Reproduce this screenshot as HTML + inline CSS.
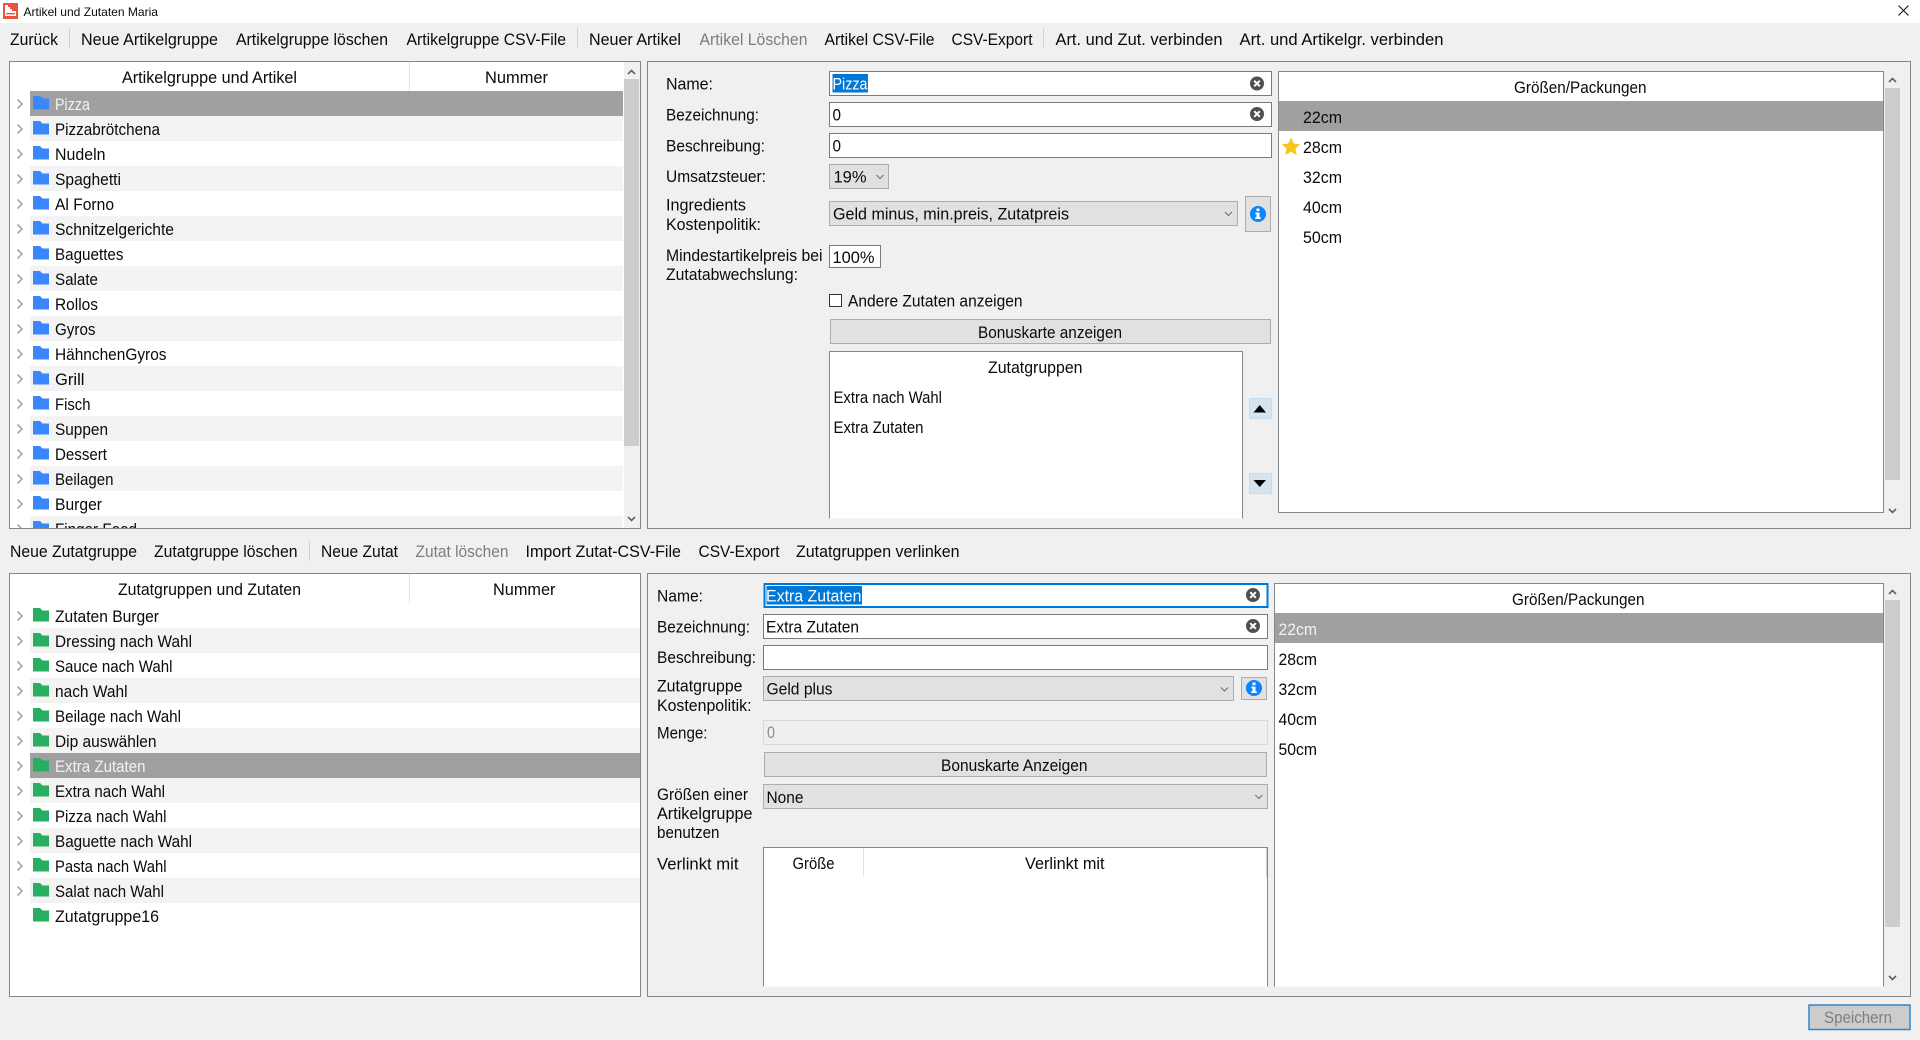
<!DOCTYPE html>
<html lang="de">
<head>
<meta charset="utf-8">
<title>Artikel und Zutaten Maria</title>
<style>
html,body{margin:0;padding:0;background:#f0f0f0;width:1920px;height:1040px;overflow:hidden}
svg{display:block}
text{font-family:"Liberation Sans",Arial,sans-serif;font-size:16.5px;fill:#0a0a0a}
.g{fill:#7d7d7d}
.w{fill:#f2f2f2}
.b{fill:#a0a0a0}
.box{fill:#fff;stroke:#82868f;stroke-width:1}
.pan{fill:#f0f0f0;stroke:#82868f;stroke-width:1}
.inp{fill:#fff;stroke:#7a7a7a;stroke-width:1}
.cmb{fill:#e1e1e1;stroke:#adadad;stroke-width:1}
.chv{fill:none;stroke:#6a6a6a;stroke-width:1}
.sc{fill:none;stroke:#606060;stroke-width:1.6}
</style>
</head>
<body>
<svg xmlns="http://www.w3.org/2000/svg" width="1920" height="1040" viewBox="0 0 1920 1040">
<defs>
<g id="ch"><path d="M17.5 8.5L22 13L17.5 17.5" fill="none" stroke="#a8a8a8" stroke-width="1.6"/></g>
<g id="fb"><path d="M33 5H40L42.5 7.5H49V18.5H33Z" fill="#3a86ff"/></g>
<g id="fg"><path d="M33 5H40L42.5 7.5H49V18.5H33Z" fill="#27ae60"/></g>
<g id="cl"><circle cx="0" cy="0" r="7" fill="#4f4f4f"/><path d="M-2.8 -2.8L2.8 2.8M2.8 -2.8L-2.8 2.8" stroke="#fff" stroke-width="2"/></g>
<g id="in"><circle cx="0" cy="0" r="8" fill="#0a84ff"/><rect x="-1.5" y="-5.5" width="3" height="2.6" fill="#fff"/><path d="M-2.6 -1.5H1.5V3.2H2.8V5H-2.8V3.2H-1.5V0.2H-2.6Z" fill="#fff"/></g>
<clipPath id="c1"><rect x="10" y="62" width="630" height="466"/></clipPath>
</defs>

<rect width="1920" height="1040" fill="#f0f0f0"/>

<!-- Title bar -->
<rect width="1920" height="23" fill="#fff"/>
<rect x="3" y="3" width="15" height="16" fill="#e8553f"/>
<path d="M5 5H8V7H10V9H12V11H16V16H5Z" fill="#fff"/>
<rect x="6" y="13" width="9" height="1.4" fill="#e8553f"/>
<text x="23.5" y="16" style="font-size:12px" textLength="134.5" lengthAdjust="spacingAndGlyphs">Artikel und Zutaten Maria</text>
<path d="M1898.5 5.5L1908.5 15.5M1908.5 5.5L1898.5 15.5" stroke="#111" stroke-width="1" fill="none"/>

<!-- Toolbar 1 -->
<text x="10" y="45" textLength="48" lengthAdjust="spacingAndGlyphs">Zurück</text>
<rect x="69" y="28" width="1" height="20" fill="#d0d0d0"/>
<text x="81" y="45" textLength="137" lengthAdjust="spacingAndGlyphs">Neue Artikelgruppe</text>
<text x="236" y="45" textLength="152" lengthAdjust="spacingAndGlyphs">Artikelgruppe löschen</text>
<text x="406.5" y="45" textLength="159.5" lengthAdjust="spacingAndGlyphs">Artikelgruppe CSV-File</text>
<rect x="577" y="28" width="1" height="20" fill="#d0d0d0"/>
<text x="589" y="45" textLength="92" lengthAdjust="spacingAndGlyphs">Neuer Artikel</text>
<text class="g" x="699.5" y="45" textLength="108" lengthAdjust="spacingAndGlyphs">Artikel Löschen</text>
<text x="824.5" y="45" textLength="110" lengthAdjust="spacingAndGlyphs">Artikel CSV-File</text>
<text x="951.5" y="45" textLength="81" lengthAdjust="spacingAndGlyphs">CSV-Export</text>
<rect x="1043" y="28" width="1" height="20" fill="#d0d0d0"/>
<text x="1055.5" y="45" textLength="167" lengthAdjust="spacingAndGlyphs">Art. und Zut. verbinden</text>
<text x="1239.5" y="45" textLength="204" lengthAdjust="spacingAndGlyphs">Art. und Artikelgr. verbinden</text>

<!-- Tree 1 -->
<rect class="box" x="9.5" y="61.5" width="631" height="467"/>
<rect x="409" y="62" width="1" height="29" fill="#e3e3e3"/>
<text x="122" y="83" textLength="175" lengthAdjust="spacingAndGlyphs">Artikelgruppe und Artikel</text>
<text x="485" y="83" textLength="63" lengthAdjust="spacingAndGlyphs">Nummer</text>
<g clip-path="url(#c1)">
<rect x="30" y="91" width="593" height="25" fill="#a0a0a0"/>
<rect x="30" y="116" width="593" height="25" fill="#f3f3f3"/>
<rect x="30" y="166" width="593" height="25" fill="#f3f3f3"/>
<rect x="30" y="216" width="593" height="25" fill="#f3f3f3"/>
<rect x="30" y="266" width="593" height="25" fill="#f3f3f3"/>
<rect x="30" y="316" width="593" height="25" fill="#f3f3f3"/>
<rect x="30" y="366" width="593" height="25" fill="#f3f3f3"/>
<rect x="30" y="416" width="593" height="25" fill="#f3f3f3"/>
<rect x="30" y="466" width="593" height="25" fill="#f3f3f3"/>
<rect x="30" y="516" width="593" height="25" fill="#f3f3f3"/>
<use href="#ch" y="91"/><use href="#fb" y="91"/>
<use href="#ch" y="116"/><use href="#fb" y="116"/>
<use href="#ch" y="141"/><use href="#fb" y="141"/>
<use href="#ch" y="166"/><use href="#fb" y="166"/>
<use href="#ch" y="191"/><use href="#fb" y="191"/>
<use href="#ch" y="216"/><use href="#fb" y="216"/>
<use href="#ch" y="241"/><use href="#fb" y="241"/>
<use href="#ch" y="266"/><use href="#fb" y="266"/>
<use href="#ch" y="291"/><use href="#fb" y="291"/>
<use href="#ch" y="316"/><use href="#fb" y="316"/>
<use href="#ch" y="341"/><use href="#fb" y="341"/>
<use href="#ch" y="366"/><use href="#fb" y="366"/>
<use href="#ch" y="391"/><use href="#fb" y="391"/>
<use href="#ch" y="416"/><use href="#fb" y="416"/>
<use href="#ch" y="441"/><use href="#fb" y="441"/>
<use href="#ch" y="466"/><use href="#fb" y="466"/>
<use href="#ch" y="491"/><use href="#fb" y="491"/>
<use href="#ch" y="516"/><use href="#fb" y="516"/>
<text class="w" x="55" y="110" textLength="35" lengthAdjust="spacingAndGlyphs">Pizza</text>
<text x="55" y="135" textLength="105" lengthAdjust="spacingAndGlyphs">Pizzabrötchena</text>
<text x="55" y="160" textLength="50.5" lengthAdjust="spacingAndGlyphs">Nudeln</text>
<text x="55" y="185" textLength="66" lengthAdjust="spacingAndGlyphs">Spaghetti</text>
<text x="55" y="210" textLength="59" lengthAdjust="spacingAndGlyphs">Al Forno</text>
<text x="55" y="235" textLength="119" lengthAdjust="spacingAndGlyphs">Schnitzelgerichte</text>
<text x="55" y="260" textLength="68.5" lengthAdjust="spacingAndGlyphs">Baguettes</text>
<text x="55" y="285" textLength="43" lengthAdjust="spacingAndGlyphs">Salate</text>
<text x="55" y="310" textLength="43" lengthAdjust="spacingAndGlyphs">Rollos</text>
<text x="55" y="335" textLength="40.5" lengthAdjust="spacingAndGlyphs">Gyros</text>
<text x="55" y="360" textLength="111.5" lengthAdjust="spacingAndGlyphs">HähnchenGyros</text>
<text x="55" y="385" textLength="29.5" lengthAdjust="spacingAndGlyphs">Grill</text>
<text x="55" y="410" textLength="35.5" lengthAdjust="spacingAndGlyphs">Fisch</text>
<text x="55" y="435" textLength="53" lengthAdjust="spacingAndGlyphs">Suppen</text>
<text x="55" y="460" textLength="52" lengthAdjust="spacingAndGlyphs">Dessert</text>
<text x="55" y="485" textLength="58.5" lengthAdjust="spacingAndGlyphs">Beilagen</text>
<text x="55" y="510" textLength="47" lengthAdjust="spacingAndGlyphs">Burger</text>
<text x="55" y="535" textLength="82" lengthAdjust="spacingAndGlyphs">Finger Food</text>
</g>
<rect x="624" y="62" width="16" height="466" fill="#f0f0f0"/>
<rect x="624" y="79" width="15" height="367" fill="#cdcdcd"/>
<path class="sc" d="M628 74L631.5 70.5L635 74"/>
<path class="sc" d="M628 517L631.5 520.5L635 517"/>

<!-- Top form panel -->
<rect class="pan" x="647.5" y="61.5" width="1263" height="467"/>
<text x="666" y="89.5" textLength="47" lengthAdjust="spacingAndGlyphs">Name:</text>
<rect class="inp" x="829.5" y="71.5" width="442" height="24"/>
<rect x="832.5" y="74" width="35.5" height="18.5" fill="#0078d7"/>
<text x="832.5" y="89.5" style="fill:#fff" textLength="35" lengthAdjust="spacingAndGlyphs">Pizza</text>
<use href="#cl" x="1257" y="83.5"/>
<text x="666" y="120.5" textLength="93" lengthAdjust="spacingAndGlyphs">Bezeichnung:</text>
<rect class="inp" x="829.5" y="102.5" width="442" height="24"/>
<text x="832.5" y="120.5" textLength="8.5" lengthAdjust="spacingAndGlyphs">0</text>
<use href="#cl" x="1257" y="114"/>
<text x="666" y="151.5" textLength="99" lengthAdjust="spacingAndGlyphs">Beschreibung:</text>
<rect class="inp" x="829.5" y="133.5" width="442" height="24"/>
<text x="832.5" y="151.5" textLength="8.5" lengthAdjust="spacingAndGlyphs">0</text>
<text x="666" y="182" textLength="100" lengthAdjust="spacingAndGlyphs">Umsatzsteuer:</text>
<rect class="cmb" x="829.5" y="164.5" width="59" height="24"/>
<text x="833.5" y="182.5" textLength="33" lengthAdjust="spacingAndGlyphs">19%</text>
<path class="chv" d="M876.5 175L880 178.5L883.5 175"/>
<text x="666" y="210.5" textLength="80" lengthAdjust="spacingAndGlyphs">Ingredients</text>
<text x="666" y="230" textLength="95" lengthAdjust="spacingAndGlyphs">Kostenpolitik:</text>
<rect class="cmb" x="829.5" y="201.5" width="408" height="24"/>
<text x="833" y="219.5" textLength="236" lengthAdjust="spacingAndGlyphs">Geld minus, min.preis, Zutatpreis</text>
<path class="chv" d="M1225 212L1228.5 215.5L1232 212"/>
<rect class="cmb" x="1245.5" y="196.5" width="25" height="35"/>
<use href="#in" x="1258" y="214"/>
<text x="666" y="261" textLength="156.5" lengthAdjust="spacingAndGlyphs">Mindestartikelpreis bei</text>
<text x="666" y="280" textLength="132" lengthAdjust="spacingAndGlyphs">Zutatabwechslung:</text>
<rect class="inp" x="829.5" y="245.5" width="51" height="22"/>
<text x="832.5" y="263" textLength="42" lengthAdjust="spacingAndGlyphs">100%</text>
<rect x="829.5" y="294.5" width="12" height="12" fill="#fff" stroke="#333"/>
<text x="848" y="306.5" textLength="174.5" lengthAdjust="spacingAndGlyphs">Andere Zutaten anzeigen</text>
<rect class="cmb" x="830.5" y="319.5" width="440" height="24"/>
<text x="978" y="338" textLength="144" lengthAdjust="spacingAndGlyphs">Bonuskarte anzeigen</text>
<rect x="829.5" y="351.5" width="413" height="167" fill="#fff"/>
<path d="M829.5 518.5V351.5H1242.5V518.5" fill="none" stroke="#82868f"/>
<text x="988" y="373" textLength="94.5" lengthAdjust="spacingAndGlyphs">Zutatgruppen</text>
<text x="833.5" y="403" textLength="108.5" lengthAdjust="spacingAndGlyphs">Extra nach Wahl</text>
<text x="833.5" y="433" textLength="90" lengthAdjust="spacingAndGlyphs">Extra Zutaten</text>
<rect x="1249.5" y="398.5" width="22" height="20" fill="#d5e4f1" stroke="#c4dcf0"/>
<path d="M1253.5 412.5H1266L1259.7 405Z" fill="#000"/>
<rect x="1249.5" y="473.5" width="22" height="20" fill="#d5e4f1" stroke="#c4dcf0"/>
<path d="M1253.5 480H1266L1259.7 487Z" fill="#000"/>

<!-- Top size list -->
<rect x="1278.5" y="71.5" width="605" height="441" class="box"/>
<text x="1514" y="93" textLength="132.5" lengthAdjust="spacingAndGlyphs">Größen/Packungen</text>
<rect x="1279" y="101" width="604" height="30" fill="#a0a0a0"/>
<text x="1303" y="123" textLength="39" lengthAdjust="spacingAndGlyphs">22cm</text>
<path d="M1291 137.5L1293.8 143.6L1300 144.3L1295.4 148.6L1296.7 155L1291 151.8L1285.3 155L1286.6 148.6L1282 144.3L1288.2 143.6Z" fill="#f5c518"/>
<text x="1303" y="153" textLength="39" lengthAdjust="spacingAndGlyphs">28cm</text>
<text x="1303" y="183" textLength="39" lengthAdjust="spacingAndGlyphs">32cm</text>
<text x="1303" y="213" textLength="39" lengthAdjust="spacingAndGlyphs">40cm</text>
<text x="1303" y="243" textLength="39" lengthAdjust="spacingAndGlyphs">50cm</text>
<rect x="1885" y="88" width="15" height="392" fill="#cdcdcd"/>
<path class="sc" d="M1889 82L1892.5 78.5L1896 82"/>
<path class="sc" d="M1889 509L1892.5 512.5L1896 509"/>

<!-- Toolbar 2 -->
<text x="10" y="557" textLength="127" lengthAdjust="spacingAndGlyphs">Neue Zutatgruppe</text>
<text x="154" y="557" textLength="143.5" lengthAdjust="spacingAndGlyphs">Zutatgruppe löschen</text>
<rect x="309" y="541" width="1" height="20" fill="#d0d0d0"/>
<text x="321" y="557" textLength="77" lengthAdjust="spacingAndGlyphs">Neue Zutat</text>
<text class="g" x="415.5" y="557" textLength="93" lengthAdjust="spacingAndGlyphs">Zutat löschen</text>
<text x="525.5" y="557" textLength="155.5" lengthAdjust="spacingAndGlyphs">Import Zutat-CSV-File</text>
<text x="698.5" y="557" textLength="81" lengthAdjust="spacingAndGlyphs">CSV-Export</text>
<text x="796" y="557" textLength="163.5" lengthAdjust="spacingAndGlyphs">Zutatgruppen verlinken</text>

<!-- Tree 2 -->
<rect class="box" x="9.5" y="573.5" width="631" height="423"/>
<rect x="409" y="574" width="1" height="29" fill="#e3e3e3"/>
<text x="118" y="595" textLength="183" lengthAdjust="spacingAndGlyphs">Zutatgruppen und Zutaten</text>
<text x="493" y="595" textLength="62.5" lengthAdjust="spacingAndGlyphs">Nummer</text>
<rect x="30" y="628" width="610" height="25" fill="#f3f3f3"/>
<rect x="30" y="678" width="610" height="25" fill="#f3f3f3"/>
<rect x="30" y="728" width="610" height="25" fill="#f3f3f3"/>
<rect x="30" y="753" width="610" height="25" fill="#a0a0a0"/>
<rect x="30" y="778" width="610" height="25" fill="#f3f3f3"/>
<rect x="30" y="828" width="610" height="25" fill="#f3f3f3"/>
<rect x="30" y="878" width="610" height="25" fill="#f3f3f3"/>
<use href="#ch" y="603"/><use href="#fg" y="603"/>
<use href="#ch" y="628"/><use href="#fg" y="628"/>
<use href="#ch" y="653"/><use href="#fg" y="653"/>
<use href="#ch" y="678"/><use href="#fg" y="678"/>
<use href="#ch" y="703"/><use href="#fg" y="703"/>
<use href="#ch" y="728"/><use href="#fg" y="728"/>
<use href="#ch" y="753"/><use href="#fg" y="753"/>
<use href="#ch" y="778"/><use href="#fg" y="778"/>
<use href="#ch" y="803"/><use href="#fg" y="803"/>
<use href="#ch" y="828"/><use href="#fg" y="828"/>
<use href="#ch" y="853"/><use href="#fg" y="853"/>
<use href="#ch" y="878"/><use href="#fg" y="878"/>
<use href="#fg" y="903"/>
<text x="55" y="622" textLength="104" lengthAdjust="spacingAndGlyphs">Zutaten Burger</text>
<text x="55" y="647" textLength="137" lengthAdjust="spacingAndGlyphs">Dressing nach Wahl</text>
<text x="55" y="672" textLength="117.5" lengthAdjust="spacingAndGlyphs">Sauce nach Wahl</text>
<text x="55" y="697" textLength="72.5" lengthAdjust="spacingAndGlyphs">nach Wahl</text>
<text x="55" y="722" textLength="126" lengthAdjust="spacingAndGlyphs">Beilage nach Wahl</text>
<text x="55" y="747" textLength="101.5" lengthAdjust="spacingAndGlyphs">Dip auswählen</text>
<text class="w" x="55" y="772" textLength="90.5" lengthAdjust="spacingAndGlyphs">Extra Zutaten</text>
<text x="55" y="797" textLength="110" lengthAdjust="spacingAndGlyphs">Extra nach Wahl</text>
<text x="55" y="822" textLength="111.5" lengthAdjust="spacingAndGlyphs">Pizza nach Wahl</text>
<text x="55" y="847" textLength="137" lengthAdjust="spacingAndGlyphs">Baguette nach Wahl</text>
<text x="55" y="872" textLength="111.5" lengthAdjust="spacingAndGlyphs">Pasta nach Wahl</text>
<text x="55" y="897" textLength="109" lengthAdjust="spacingAndGlyphs">Salat nach Wahl</text>
<text x="55" y="922" textLength="104" lengthAdjust="spacingAndGlyphs">Zutatgruppe16</text>

<!-- Bottom form panel -->
<rect class="pan" x="647.5" y="573.5" width="1263" height="423"/>
<text x="657" y="601.5" textLength="46" lengthAdjust="spacingAndGlyphs">Name:</text>
<rect x="764.5" y="584" width="503" height="23" fill="#fff" stroke="#0078d7" stroke-width="2"/>
<rect x="766.5" y="586" width="95.5" height="18.5" fill="#0078d7"/>
<text x="766" y="601.5" style="fill:#fff" textLength="95.5" lengthAdjust="spacingAndGlyphs">Extra Zutaten</text>
<use href="#cl" x="1253" y="595"/>
<text x="657" y="632.5" textLength="93" lengthAdjust="spacingAndGlyphs">Bezeichnung:</text>
<rect class="inp" x="763.5" y="614.5" width="504" height="24"/>
<text x="766" y="632.5" textLength="93" lengthAdjust="spacingAndGlyphs">Extra Zutaten</text>
<use href="#cl" x="1253" y="626"/>
<text x="657" y="663" textLength="99" lengthAdjust="spacingAndGlyphs">Beschreibung:</text>
<rect class="inp" x="763.5" y="645.5" width="504" height="24"/>
<text x="657" y="691.5" textLength="85.5" lengthAdjust="spacingAndGlyphs">Zutatgruppe</text>
<text x="657" y="711" textLength="94.5" lengthAdjust="spacingAndGlyphs">Kostenpolitik:</text>
<rect class="cmb" x="763.5" y="676.5" width="470" height="24"/>
<text x="766.5" y="694.5" textLength="66" lengthAdjust="spacingAndGlyphs">Geld plus</text>
<path class="chv" d="M1221 687.5L1224.5 691L1228 687.5"/>
<rect class="cmb" x="1241.5" y="677.5" width="25" height="22"/>
<use href="#in" x="1254" y="688"/>
<text x="657" y="738.5" textLength="50.5" lengthAdjust="spacingAndGlyphs">Menge:</text>
<rect x="763.5" y="720.5" width="504" height="24" fill="#efefef" stroke="#d9d9d9"/>
<text x="767" y="738" style="fill:#8c8c8c" textLength="8" lengthAdjust="spacingAndGlyphs">0</text>
<rect class="cmb" x="764.5" y="752.5" width="502" height="24"/>
<text x="941" y="771" textLength="146.5" lengthAdjust="spacingAndGlyphs">Bonuskarte Anzeigen</text>
<text x="657" y="800" textLength="91" lengthAdjust="spacingAndGlyphs">Größen einer</text>
<text x="657" y="819" textLength="95.5" lengthAdjust="spacingAndGlyphs">Artikelgruppe</text>
<text x="657" y="838" textLength="62.5" lengthAdjust="spacingAndGlyphs">benutzen</text>
<rect class="cmb" x="763.5" y="784.5" width="504" height="24"/>
<text x="766.5" y="803" textLength="37" lengthAdjust="spacingAndGlyphs">None</text>
<path class="chv" d="M1255.3 795L1258.8 798.5L1262.3 795"/>
<text x="657" y="869.5" textLength="81.5" lengthAdjust="spacingAndGlyphs">Verlinkt mit</text>
<rect x="763.5" y="847.5" width="504" height="139" fill="#fff"/>
<path d="M763.5 986.5V847.5H1267.5V986.5" fill="none" stroke="#82868f"/>
<rect x="863" y="848" width="1" height="29" fill="#e3e3e3"/>
<rect x="1266" y="848" width="1" height="29" fill="#cfcfcf"/>
<text x="792.5" y="869" textLength="42" lengthAdjust="spacingAndGlyphs">Größe</text>
<text x="1025" y="869" textLength="79.5" lengthAdjust="spacingAndGlyphs">Verlinkt mit</text>

<!-- Bottom size list -->
<rect x="1274.5" y="583.5" width="609" height="403" fill="#fff"/>
<path d="M1274.5 986.5V583.5H1883.5V986.5" fill="none" stroke="#82868f"/>
<text x="1512" y="605" textLength="132.5" lengthAdjust="spacingAndGlyphs">Größen/Packungen</text>
<rect x="1275" y="613" width="608" height="30" fill="#a0a0a0"/>
<text class="w" x="1278.5" y="635" textLength="38.5" lengthAdjust="spacingAndGlyphs">22cm</text>
<text x="1278.5" y="665" textLength="38.5" lengthAdjust="spacingAndGlyphs">28cm</text>
<text x="1278.5" y="695" textLength="38.5" lengthAdjust="spacingAndGlyphs">32cm</text>
<text x="1278.5" y="725" textLength="38.5" lengthAdjust="spacingAndGlyphs">40cm</text>
<text x="1278.5" y="755" textLength="38.5" lengthAdjust="spacingAndGlyphs">50cm</text>
<rect x="1885" y="600" width="15" height="327" fill="#cdcdcd"/>
<path class="sc" d="M1889 594L1892.5 590.5L1896 594"/>
<path class="sc" d="M1889 976L1892.5 979.5L1896 976"/>

<!-- Save -->
<rect x="1809" y="1005" width="101" height="24.5" fill="#cccccc" stroke="#2f86cc" stroke-width="1.5"/>
<text x="1824" y="1023" style="fill:#7f7f7f" textLength="68" lengthAdjust="spacingAndGlyphs">Speichern</text>
</svg>
</body>
</html>
